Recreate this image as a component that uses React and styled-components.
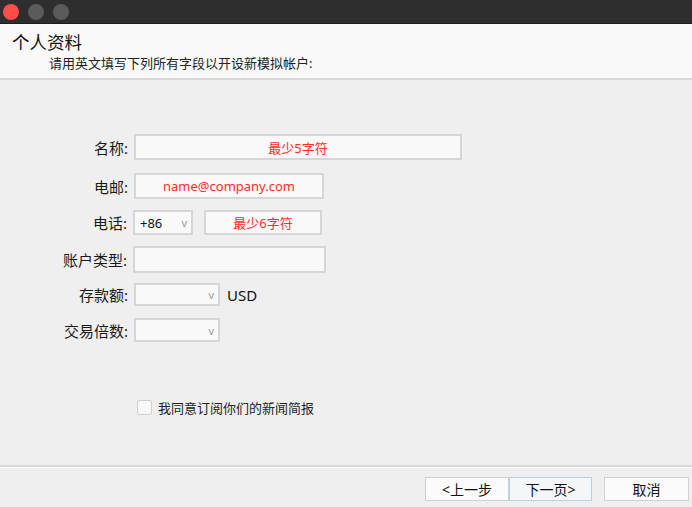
import React from 'react'
import styled, { createGlobalStyle } from 'styled-components'

const GlobalStyle = createGlobalStyle`
    html, body {
        margin: 0;
        padding: 0;
        background: #efefef;
        font-family: "Noto Sans", "Noto Sans CJK SC", sans-serif;
    }
`

const Window = styled.div`
    width: 692px;
    height: 507px;
    display: flex;
    flex-direction: column;
    background: #efefef;
    overflow: hidden;
`

const TitleBar = styled.div`
    height: 23px;
    background: #2e2e2e;
    border-bottom: 1px solid #1c1c1c;
    display: flex;
    align-items: center;
    gap: 9px;
    padding-left: 3px;
`

const Light = styled.span`
    width: 16px;
    height: 16px;
    border-radius: 50%;
    background: ${p => p.color};
`

const Header = styled.div`
    height: 54px;
    background: #f9f9f9;
    border-bottom: 2px solid #d9d9d9;
    display: flex;
    flex-direction: column;
`

const Title = styled.div`
    font-size: 17.5px;
    color: #111;
    padding: 6px 0 0 12px;
    line-height: 24px;
`

const Subtitle = styled.div`
    font-size: 13px;
    color: #222;
    padding-left: 49px;
    line-height: 18px;
`

const Body = styled.div`
    flex: 1;
    display: flex;
    flex-direction: column;
    padding-top: 54px;
    border-bottom: 2px solid #d9d9d9;
`

const Row = styled.div`
    display: flex;
    align-items: center;
    height: ${p => p.h}px;
    margin-top: ${p => p.mt || 0}px;
`

const Label = styled.div`
    width: ${p => p.w || 134}px;
    text-align: right;
    font-size: 15px;
    color: #1a1a1a;
    padding-right: 6px;
    box-sizing: border-box;
`

const Field = styled.div`
    width: ${p => p.w}px;
    height: 100%;
    box-sizing: border-box;
    border: 2px solid #d6d6d6;
    background: #f9f9f9;
    display: flex;
    align-items: center;
    justify-content: center;
    font-size: 13px;
    color: #ff2a2a;
    margin-left: ${p => p.ml || 0}px;
`

const Select = styled.div`
    width: ${p => p.w}px;
    height: 100%;
    box-sizing: border-box;
    border: 2px solid #d6d6d6;
    background: #f9f9f9;
    display: flex;
    align-items: center;
    justify-content: space-between;
    padding: 0 4px 0 5px;
    font-size: 13px;
    color: #111;
`

const Caret = styled.span`
    color: #999;
    font-size: 11px;
`

const Unit = styled.span`
    margin-left: 7px;
    font-size: 15px;
    color: #111;
`

const CheckRow = styled.div`
    display: flex;
    align-items: center;
    margin: 56px 0 0 137px;
    gap: 6px;
    font-size: 13px;
    color: #222;
`

const Box = styled.span`
    width: 15px;
    height: 15px;
    box-sizing: border-box;
    border: 1px solid #cfcfcf;
    border-radius: 2px;
    background: #f8f8f8;
`

const Footer = styled.div`
    height: 40px;
    border-top: 1px solid #fafafa;
    display: flex;
    align-items: center;
    padding-left: 425px;
    box-sizing: border-box;
`

const Button = styled.button`
    width: ${p => p.w}px;
    height: 24px;
    margin-left: ${p => p.ml || 0}px;
    border: 1px solid ${p => (p.primary ? '#b5d0e6' : '#d0d0d0')};
    background: ${p => (p.primary ? '#f3f7fa' : '#fbfbfb')};
    font-family: "Noto Sans", "Noto Sans CJK SC", sans-serif;
    font-size: 14px;
    color: #111;
    padding: 0;
    margin-top: 2px;
`

export default function App() {
    return (
        <Window>
            <GlobalStyle />
            <TitleBar>
                <Light color="#fe4c4b" />
                <Light color="#5b5b5b" />
                <Light color="#5b5b5b" />
            </TitleBar>
            <Header>
                <Title>个人资料</Title>
                <Subtitle>请用英文填写下列所有字段以开设新模拟帐户:</Subtitle>
            </Header>
            <Body>
                <Row h={26}>
                    <Label>名称:</Label>
                    <Field w={328}>最少5字符</Field>
                </Row>
                <Row h={26} mt={13}>
                    <Label>电邮:</Label>
                    <Field w={190}>name@company.com</Field>
                </Row>
                <Row h={25} mt={11}>
                    <Label w={133}>电话:</Label>
                    <Select w={60}>
                        +86<Caret>v</Caret>
                    </Select>
                    <Field w={118} ml={11}>最少6字符</Field>
                </Row>
                <Row h={27} mt={11}>
                    <Label w={133}>账户类型:</Label>
                    <Field w={193} />
                </Row>
                <Row h={23} mt={10}>
                    <Label>存款额:</Label>
                    <Select w={86}>
                        <span /><Caret>v</Caret>
                    </Select>
                    <Unit>USD</Unit>
                </Row>
                <Row h={24} mt={12}>
                    <Label>交易倍数:</Label>
                    <Select w={86}>
                        <span /><Caret>v</Caret>
                    </Select>
                </Row>
                <CheckRow>
                    <Box />
                    我同意订阅你们的新闻简报
                </CheckRow>
            </Body>
            <Footer>
                <Button w={84}>&lt;上一步</Button>
                <Button w={83} primary>下一页&gt;</Button>
                <Button w={85} ml={12}>取消</Button>
            </Footer>
        </Window>
    )
}
